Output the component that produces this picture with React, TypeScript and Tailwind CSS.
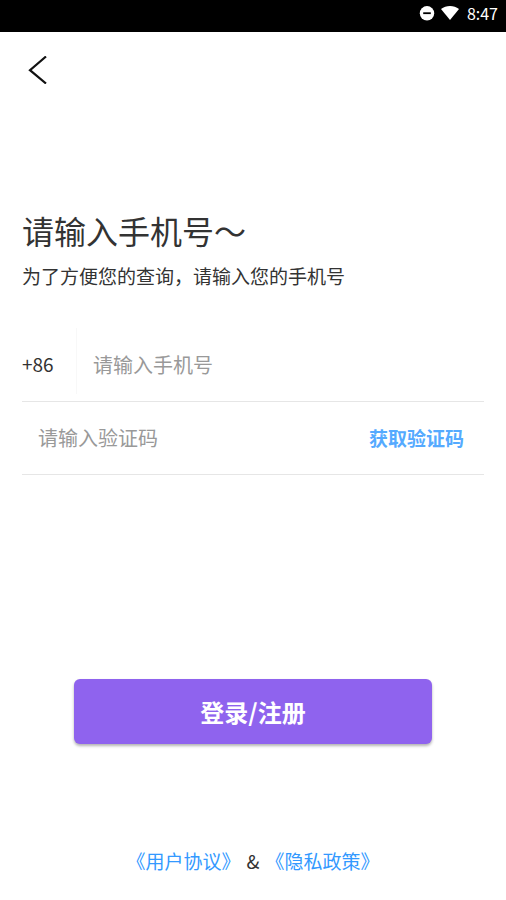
import { useState } from "react";

/** Android status bar with do-not-disturb, wifi and clock. */
function StatusBar() {
  return (
    <div className="flex h-8 items-center justify-end bg-black pr-2 pb-1.5 text-white">
      <svg viewBox="0 0 16 16" className="mr-1.5 size-4" aria-hidden="true">
        <circle cx="8" cy="8.3" r="7.2" fill="currentColor" />
        <path d="M4.2 8.2h7.6" stroke="#000" strokeWidth="1.8" />
      </svg>
      <svg viewBox="0 0 18 16" className="mr-2 h-4 w-[18px]" aria-hidden="true">
        <path d="M0 4C2.6 2 5.7 1 9 1s6.4 1 9 3L9 15z" fill="currentColor" />
      </svg>
      <span className="text-base leading-6">8:47</span>
    </div>
  );
}

/** Renders the phone number login page. */
export default function App() {
  const [phone, setPhone] = useState("");
  const [code, setCode] = useState("");

  return (
    <div className="min-h-screen bg-white font-['Noto_Sans_CJK_SC',sans-serif] text-[#333333]">
      <StatusBar />

      <header className="px-6 pt-6">
        <button type="button" aria-label="返回" className="block">
          <svg viewBox="0 0 28 28" className="size-7" fill="none" aria-hidden="true">
            <path d="M22 0.5L6 14.2L22 27.5" stroke="#111" strokeWidth="2.2" />
          </svg>
        </button>
      </header>

      <main className="px-[22px] pt-[122px]">
        <h1 className="text-[32px] leading-12">请输入手机号～</h1>
        <p className="mt-2.5 text-[19px] leading-6">为了方便您的查询，请输入您的手机号</p>

        <form className="mt-10" onSubmit={(e) => e.preventDefault()}>
          <div className="flex h-[74px] items-center border-b border-[#e6e6e6]">
            <label htmlFor="phone" className="w-[54px] text-[19px]">
              +86
            </label>
            <div className="h-[66px] w-px self-start bg-[#f8f8f8]" />
            <input
              id="phone"
              type="tel"
              value={phone}
              onChange={(e) => setPhone(e.target.value)}
              placeholder="请输入手机号"
              className="ml-4 min-w-0 flex-1 text-xl placeholder:text-[#999999] focus:outline-none"
            />
          </div>

          <div className="flex h-[73px] items-center border-b border-[#e6e6e6] pr-5 pl-4">
            <input
              type="text"
              aria-label="验证码"
              value={code}
              onChange={(e) => setCode(e.target.value)}
              placeholder="请输入验证码"
              className="min-w-0 flex-1 text-xl placeholder:text-[#999999] focus:outline-none"
            />
            <button type="button" className="text-[19px] font-bold text-[#55aaff]">
              获取验证码
            </button>
          </div>

          <div className="mt-51 px-[52px]">
            <button
              type="submit"
              className="h-[65px] w-full rounded-md bg-[#8f63ee] text-2xl font-bold text-white shadow-[0_2px_3px_rgba(0,0,0,0.3)]"
            >
              登录/注册
            </button>
          </div>
        </form>
      </main>

      <footer className="mt-[103px] flex justify-center gap-1.5 text-[19px] leading-7">
        <a href="#terms" className="text-[#3399ff]">
          《用户协议》
        </a>
        <span>&amp;</span>
        <a href="#privacy" className="text-[#3399ff]">
          《隐私政策》
        </a>
      </footer>
    </div>
  );
}
